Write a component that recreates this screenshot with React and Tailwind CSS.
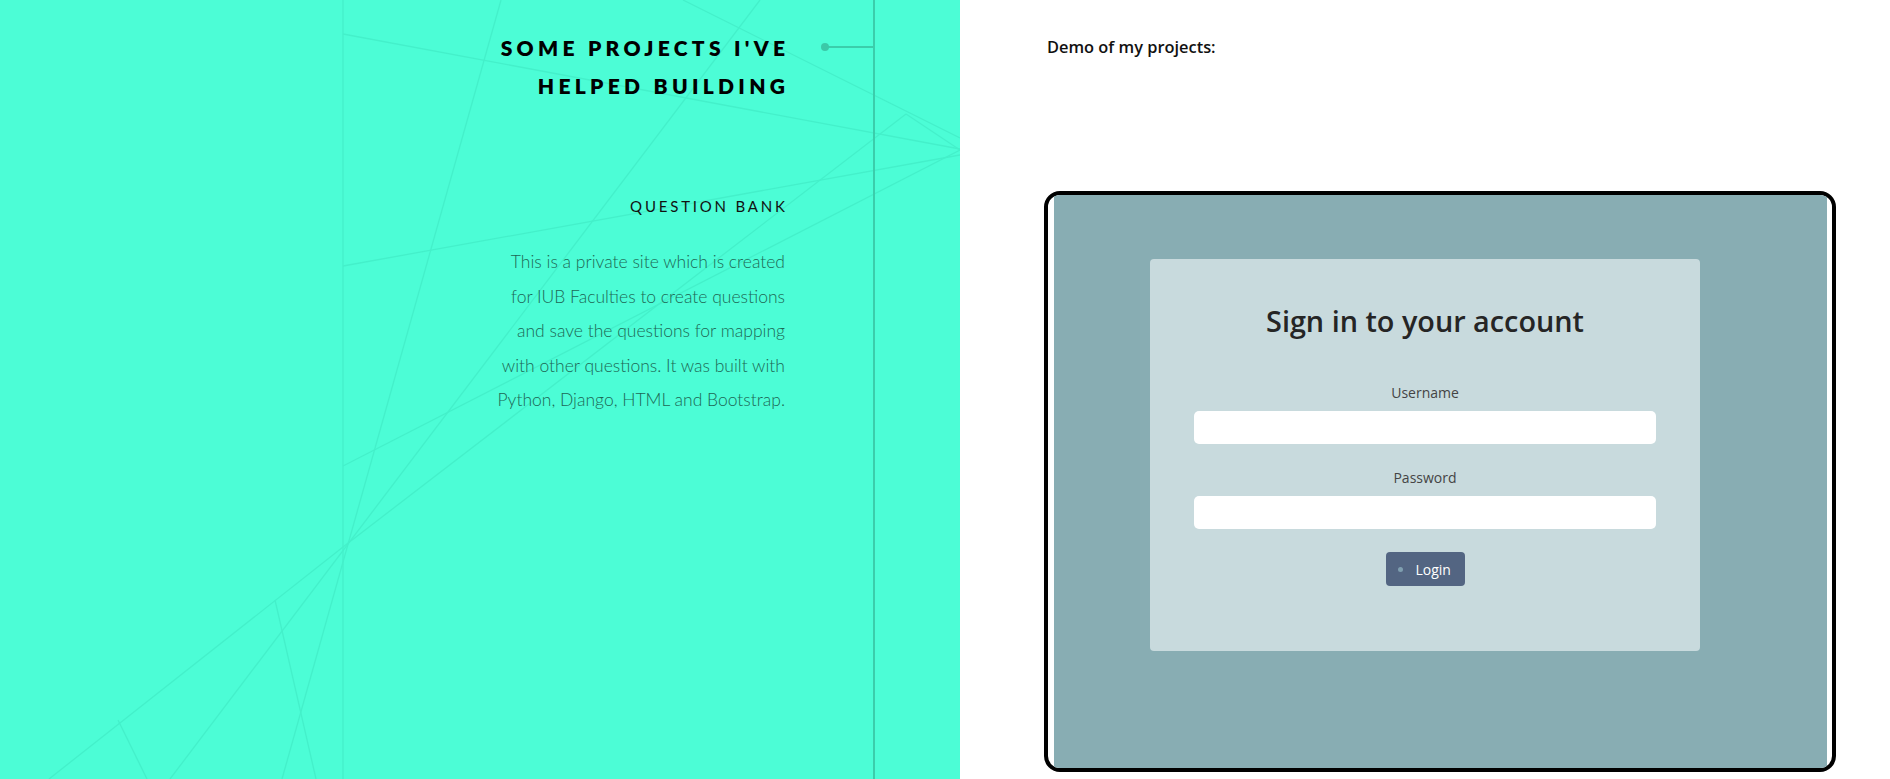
import React from "react";

// faint background lines on the green panel (panel coords 960x779)
const BG_LINES = [
  [343, 0, 343, 779],
  [343, 34, 960, 149],
  [683, 0, 960, 138],
  [343, 266, 960, 155],
  [343, 466, 960, 150],
  [501, 0, 282, 779],
  [760, 0, 170, 779],
  [49, 779, 343, 547],
  [343, 547, 906, 114],
  [906, 114, 960, 150],
  [275, 600, 316, 779],
  [118, 720, 147, 779],
];

const Lines = () => (
  <svg
    className="absolute inset-0"
    width="960"
    height="779"
    viewBox="0 0 960 779"
  >
    {BG_LINES.map(([x1, y1, x2, y2], i) => (
      <line
        key={i}
        x1={x1}
        y1={y1}
        x2={x2}
        y2={y2}
        stroke="#44f0ca"
        strokeWidth="1.3"
      />
    ))}
    {/* timeline */}
    <line x1="874" y1="0" x2="874" y2="779" stroke="#3bcdab" strokeWidth="2" />
    <line x1="825" y1="47" x2="874" y2="47" stroke="#3bcdab" strokeWidth="2" />
    <circle cx="825" cy="47" r="4" fill="#3bc9a8" />
  </svg>
);

const LoginDemo = () => (
  <div className="w-[792px] h-[581px] border-[4px] border-black rounded-[16px] pl-[6px] pr-[5px] overflow-hidden bg-white">
    <div className="h-full bg-[#88adb3] pt-[64px] pl-[96px]">
      <div className="w-[550px] h-[392px] bg-[#c8dadd] rounded-[4px] pt-[45px] px-[44px] flex flex-col items-center">
        <h3 className="font-['Open_Sans',sans-serif] font-semibold text-[28.8px] leading-[34px] text-[#252525]">
          Sign in to your account
        </h3>
        <label className="mt-[45px] font-['Open_Sans',sans-serif] text-[14px] leading-[20px] text-[#444]">
          Username
        </label>
        <input className="mt-[8px] w-full h-[33px] bg-white rounded-[5px] outline-none" />
        <label className="mt-[24px] font-['Open_Sans',sans-serif] text-[14px] leading-[20px] text-[#444]">
          Password
        </label>
        <input
          type="password"
          className="mt-[8px] w-full h-[33px] bg-white rounded-[5px] outline-none"
        />
        <button className="mt-[23px] h-[34px] w-[79px] bg-[#536582] rounded-[4px] flex items-center pl-[12px] gap-[13px] font-['Open_Sans',sans-serif] text-[14px] text-white">
          <span className="w-[5px] h-[5px] rounded-full bg-[#7f9fb0]" />
          Login
        </button>
      </div>
    </div>
  </div>
);

export default function App() {
  return (
    <div className="flex w-[1890px] h-[779px] overflow-hidden bg-white">
      {/* Left: projects text */}
      <div className="relative w-[960px] h-full bg-[#4cfdd6] overflow-hidden shrink-0">
        <Lines />
        <div className="relative flex flex-col items-end pr-[175px] pt-[29px] text-right">
          <h2 className="font-['Lato',sans-serif] font-extrabold text-[21px] leading-[38px] tracking-[4.3px] mr-[-4.3px] text-black">
            SOME PROJECTS I'VE
            <br />
            HELPED BUILDING
          </h2>
          <h4 className="mt-[91px] font-['Lato',sans-serif] text-[15px] leading-[20px] tracking-[2.8px] mr-[-2.8px] text-[#111]">
            QUESTION BANK
          </h4>
          <p className="mt-[29px] font-['Lato',sans-serif] font-light text-[17.5px] leading-[34.6px] text-[#1d6855] whitespace-nowrap">
            This is a private site which is created
            <br />
            for IUB Faculties to create questions
            <br />
            and save the questions for mapping
            <br />
            with other questions. It was built with
            <br />
            Python, Django, HTML and Bootstrap.
          </p>
        </div>
      </div>

      {/* Right: demo */}
      <div className="flex-1 pl-[84px] pt-[37px]">
        <p className="pl-[3px] font-['Open_Sans',sans-serif] font-semibold text-[16.4px] leading-[20px] text-[#111]">
          Demo of my projects:
        </p>
        <div className="mt-[134px]">
          <LoginDemo />
        </div>
      </div>
    </div>
  );
}
